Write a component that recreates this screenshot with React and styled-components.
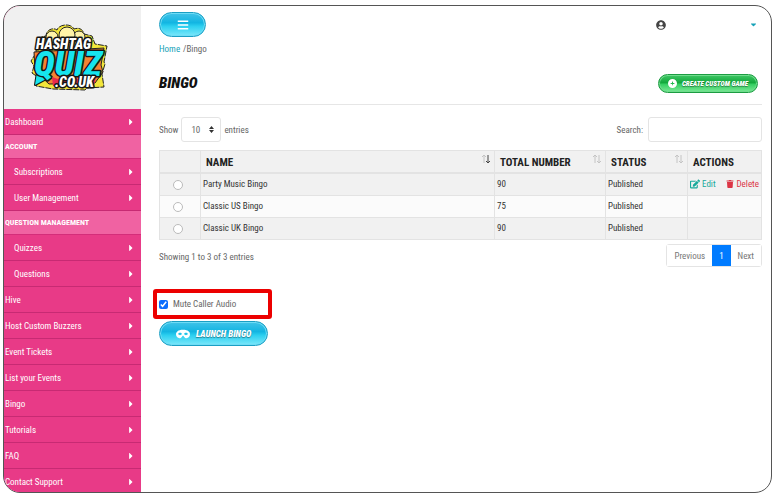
import React, { useState } from "react";
import styled, { createGlobalStyle } from "styled-components";
import {
  FaBars,
  FaCaretDown,
  FaCaretRight,
  FaEdit,
  FaMask,
  FaTrash,
  FaUserCircle
} from "react-icons/fa";
import { FaCirclePlus } from "react-icons/fa6";

const fontStack = `"Roboto Condensed", Roboto, "Liberation Sans", sans-serif`;

const GlobalStyle = createGlobalStyle`
  * {
    box-sizing: border-box;
  }

  body {
    margin: 0;
    background: #fff;
    color: #666;
    font-family: ${fontStack};
    font-size: 9px;
    line-height: 16px;
  }

  button, input, select {
    font: inherit;
    color: inherit;
    margin: 0;
  }

  a {
    text-decoration: none;
  }
`;

const Frame = styled.div`
  display: flex;
  margin: 5px 4px 8px 3px;
  min-height: calc(100vh - 13px);
  border: 1px solid #555;
  border-radius: 17px;
  overflow: hidden;
`;

const Sidebar = styled.aside`
  flex: 0 0 137px;
  background: #e83e8c;
`;

const LogoBox = styled.div`
  display: flex;
  justify-content: center;
  padding: 18px 8px 13px 0;
  background: #f0f0f0;

  svg {
    display: block;
  }
`;

const NavLink = styled.a`
  display: flex;
  align-items: center;
  justify-content: space-between;
  padding: 5px 5px 4px ${props => (props.$nested ? "10px" : "1px")};
  border-bottom: 1px solid #c72a73;
  background: #e83a87;
  color: #fff;

  &:last-child {
    padding-bottom: 2px;
    border-bottom: 0;
  }
`;

const NavHeading = styled.h2`
  margin: 0;
  padding: 4px 1px 3px;
  border-bottom: 1px solid #d42d7a;
  background: #f062a2;
  color: #fff;
  font-size: 8px;
  font-weight: 700;
`;

const Main = styled.main`
  flex: 1;
  min-width: 0;
  padding: 6px 9px 16px 18px;
`;

const Bar = styled.div`
  display: flex;
  align-items: center;
  justify-content: space-between;
`;

const UserMenu = styled.button`
  display: flex;
  align-items: center;
  justify-content: space-between;
  width: 106px;
  padding: 0 4px 0 0;
  border: 0;
  background: none;
  color: #444;

  svg:last-child {
    color: #17a2b8;
  }
`;

const GlossyButton = styled.button`
  display: inline-flex;
  align-items: center;
  justify-content: center;
  gap: ${props => (props.$small ? "5px" : "6px")};
  height: ${props => (props.$small ? "19px" : "25px")};
  padding: 0 ${props => (props.$small ? "9px" : "16px")};
  border: 1px solid ${props => (props.$green ? "#1c9c42" : "#1a9fc4")};
  border-radius: 13px;
  background: ${props =>
    props.$green
      ? "linear-gradient(#3fc765, #12a83c 45%, #35cf62 55%, #7be896)"
      : "linear-gradient(#41c3e8, #12b5e2 42%, #2cd0f0 58%, #7be7fa)"};
  box-shadow: inset 0 0 0 1px ${props => (props.$green ? "#6fdc8c" : "#6fdcf5")};
  color: #fff;
  font-size: ${props => (props.$small ? "7px" : "9px")};
  font-style: italic;
  font-weight: 900;
  text-shadow: 0 1px 1px #0006;
  white-space: nowrap;
`;

const MenuButton = styled(GlossyButton)`
  width: 47px;
  padding: 0;
`;

const Breadcrumb = styled.nav`
  display: flex;
  gap: 3px;
  margin-top: 4px;

  a {
    color: #17a2b8;
  }
`;

const TitleBar = styled(Bar)`
  margin-top: 14px;
  padding: 0 4px 8px 0;
  border-bottom: 1px solid #e6e6e6;
`;

const Title = styled.h1`
  margin: 0;
  color: #111;
  font-size: 15px;
  font-style: italic;
  font-weight: 900;
  line-height: 25px;
`;

const Controls = styled(Bar)`
  margin-top: 12px;
`;

const Field = styled.label`
  display: flex;
  align-items: center;
  gap: ${props => props.$gap || "3px"};
`;

const SelectBox = styled.span`
  position: relative;

  svg {
    position: absolute;
    top: 9px;
    right: 7px;
  }
`;

const LengthSelect = styled.select`
  width: 40px;
  height: 25px;
  padding: 0 9px;
  border: 1px solid #e4e4e4;
  border-radius: 3px;
  background: #fff;
  appearance: none;
`;

const SearchInput = styled.input`
  width: 114px;
  height: 25px;
  padding: 0 6px;
  border: 1px solid #e4e4e4;
  border-radius: 3px;
`;

const Table = styled.table`
  width: 100%;
  margin-top: 8px;
  border-collapse: collapse;
  table-layout: fixed;
  color: #333;

  th,
  td {
    border: 1px solid #e3e3e3;
    text-align: left;
  }

  th {
    padding: 3px 5px 1px;
    border-bottom-width: 2px;
    background: #f1f1f1;
    color: #222;
    font-size: 11px;
    line-height: 17px;
  }

  td {
    padding: 2px 2px 3px;
    line-height: 16px;
  }

  tbody tr:nth-child(odd) {
    background: #f1f1f1;
  }

  tbody tr:nth-child(even) {
    background: #fbfbfb;
  }
`;

const Col = styled.col`
  width: ${props => props.$width || "auto"};
`;

const HeadCell = styled.div`
  display: flex;
  justify-content: space-between;
  white-space: nowrap;

  svg {
    margin-right: -2px;
  }
`;

const Radio = styled.input`
  display: block;
  width: 10px;
  height: 10px;
  margin: 2px 0 0 11px;
  border: 1px solid #bbb;
  border-radius: 50%;
  background: #fff;
  appearance: none;

  &:checked {
    border: 3px solid #007bff;
  }
`;

const Actions = styled.div`
  display: flex;
  justify-content: space-between;
`;

const ActionLink = styled.a`
  display: flex;
  align-items: center;
  gap: 2px;
  color: ${props => (props.$danger ? "#dc3545" : "#17a99b")};
`;

const TableFooter = styled.div`
  display: flex;
  align-items: flex-start;
  justify-content: space-between;
  margin-top: 4px;
`;

const Info = styled.p`
  margin: 5px 0 0;
`;

const Pagination = styled.nav`
  display: flex;
  border: 1px solid #e4e4e4;
  border-radius: 3px;
`;

const PageButton = styled.button`
  height: 21px;
  padding: 0 7px;
  border: 0;
  background: ${props => (props.$active ? "#007bff" : "#fff")};
  color: ${props => (props.$active ? "#fff" : "#777")};
`;

const MuteBox = styled.div`
  display: flex;
  align-items: center;
  width: 119px;
  height: 30px;
  margin: 22px 0 2px -6px;
  padding: 0 2px;
  border: 4px solid #ec0000;
  border-radius: 3px;
`;

const CheckBox = styled.input`
  width: 9px;
  height: 9px;
  accent-color: #0d6efd;
`;

const Logo = () => (
  <svg width="82" height="72" viewBox="0 0 82 72" role="img" aria-label="Hashtag Quiz .co.uk">
    <path
      d="M9 14l9-2c0-6 7-9 11-6 2-6 14-7 17-1 6-2 9 1 10 5l8 2 3 8 12 2-3 16 1 2-3 10 2 13-17 1-2 2-32-1-17-3 3-8-7-5 2-7-3-5 5-8z"
      fill="#f3e63a"
      stroke="#222"
      strokeDasharray="6 1"
    />
    <circle cx="24" cy="13" r="6" fill="#fff3a8" stroke="#222" />
    <circle cx="51" cy="13" r="6" fill="#fff3a8" stroke="#222" />
    <circle cx="39" cy="11" r="8" fill="#fff3a8" stroke="#222" />
    <path d="M6 28l70-4-3 17 2 7-8 11-46 1-14-13z" fill="#f58232" stroke="#222" />
    <g
      fontFamily={fontStack}
      fontStyle="italic"
      fontWeight="900"
      stroke="#151515"
      paintOrder="stroke"
      strokeLinejoin="round"
    >
      <path d="M9 48l-2 13 15-8z" fill="#16e5ee" strokeWidth="2" />
      <text x="6" y="52" fontSize="35" fill="#16e5ee" strokeWidth="3">QUIZ</text>
      <path
        d="M25 62l-1-9 6 2 4-4 5 4 5-4 6 4 6-4 5 4 7-3-2 10z"
        fill="#e8294f"
        stroke="none"
      />
      <text x="8" y="25" fontSize="14" fill="#fff" strokeWidth="3">HASHTAG</text>
      <text x="27" y="63" fontSize="14" fill="#fff" strokeWidth="3">.CO.UK</text>
    </g>
  </svg>
);

const SortIcon = ({ sorted }) => (
  <svg width="10" height="10" viewBox="0 0 10 10" fill="none">
    <path d="M3 9V1M1 3l2-2 2 2" stroke="#c4c4c4" />
    <path d="M7 1v8M5 7l2 2 2-2" stroke={sorted ? "#444" : "#c4c4c4"} />
  </svg>
);

const navItems = [
  { label: "Dashboard" },
  { label: "ACCOUNT", heading: true },
  { label: "Subscriptions", nested: true },
  { label: "User Management", nested: true },
  { label: "QUESTION MANAGEMENT", heading: true },
  { label: "Quizzes", nested: true },
  { label: "Questions", nested: true },
  { label: "Hive" },
  { label: "Host Custom Buzzers" },
  { label: "Event Tickets" },
  { label: "List your Events" },
  { label: "Bingo" },
  { label: "Tutorials" },
  { label: "FAQ" },
  { label: "Contact Support" }
];

const games = [
  { name: "Party Music Bingo", total: 90, status: "Published", custom: true },
  { name: "Classic US Bingo", total: 75, status: "Published" },
  { name: "Classic UK Bingo", total: 90, status: "Published" }
];

const App = () => {
  const [selected, setSelected] = useState("");
  const [muted, setMuted] = useState(true);

  return (
    <Frame>
      <GlobalStyle />
      <Sidebar>
        <LogoBox>
          <Logo />
        </LogoBox>
        <nav>
          {navItems.map(item =>
            item.heading ? (
              <NavHeading key={item.label}>{item.label}</NavHeading>
            ) : (
              <NavLink key={item.label} href="#" $nested={item.nested}>
                {item.label}
                <FaCaretRight size={10} />
              </NavLink>
            )
          )}
        </nav>
      </Sidebar>
      <Main>
        <Bar>
          <MenuButton aria-label="Toggle menu">
            <FaBars size={12} />
          </MenuButton>
          <UserMenu aria-label="Account">
            <FaUserCircle size={10} />
            <FaCaretDown size={9} />
          </UserMenu>
        </Bar>
        <Breadcrumb>
          <a href="#">Home</a>
          <span>/Bingo</span>
        </Breadcrumb>
        <TitleBar>
          <Title>BINGO</Title>
          <GlossyButton $green $small>
            <FaCirclePlus size={9} />
            CREATE CUSTOM GAME
          </GlossyButton>
        </TitleBar>
        <Controls>
          <Field>
            Show
            <SelectBox>
              <LengthSelect defaultValue="10">
                <option>10</option>
                <option>25</option>
                <option>50</option>
              </LengthSelect>
              <svg width="5" height="7" viewBox="0 0 5 7" fill="#333">
                <path d="M0 3l2.500-3L5 3zM0 4h5L2.500 7z" />
              </svg>
            </SelectBox>
            entries
          </Field>
          <Field $gap="5px">
            Search:
            <SearchInput type="search" />
          </Field>
        </Controls>
        <Table>
          <colgroup>
            <Col $width="41px" />
            <Col />
            <Col $width="111px" />
            <Col $width="82px" />
            <Col $width="74px" />
          </colgroup>
          <thead>
            <tr>
              <th aria-label="Select" />
              <th>
                <HeadCell>
                  NAME <SortIcon sorted />
                </HeadCell>
              </th>
              <th>
                <HeadCell>
                  TOTAL NUMBER <SortIcon />
                </HeadCell>
              </th>
              <th>
                <HeadCell>
                  STATUS <SortIcon />
                </HeadCell>
              </th>
              <th>ACTIONS</th>
            </tr>
          </thead>
          <tbody>
            {games.map(game => (
              <tr key={game.name}>
                <td>
                  <Radio
                    type="radio"
                    name="game"
                    aria-label={game.name}
                    checked={selected === game.name}
                    onChange={() => setSelected(game.name)}
                  />
                </td>
                <td>{game.name}</td>
                <td>{game.total}</td>
                <td>{game.status}</td>
                <td>
                  {game.custom && (
                    <Actions>
                      <ActionLink href="#">
                        <FaEdit size={10} /> Edit
                      </ActionLink>
                      <ActionLink href="#" $danger>
                        <FaTrash size={8} /> Delete
                      </ActionLink>
                    </Actions>
                  )}
                </td>
              </tr>
            ))}
          </tbody>
        </Table>
        <TableFooter>
          <Info>Showing 1 to 3 of 3 entries</Info>
          <Pagination aria-label="Pages">
            <PageButton>Previous</PageButton>
            <PageButton $active>1</PageButton>
            <PageButton>Next</PageButton>
          </Pagination>
        </TableFooter>
        <MuteBox>
          <Field $gap="5px">
            <CheckBox
              type="checkbox"
              checked={muted}
              onChange={e => setMuted(e.target.checked)}
            />
            Mute Caller Audio
          </Field>
        </MuteBox>
        <GlossyButton>
          <FaMask size={14} />
          LAUNCH BINGO
        </GlossyButton>
      </Main>
    </Frame>
  );
};

export default App;
